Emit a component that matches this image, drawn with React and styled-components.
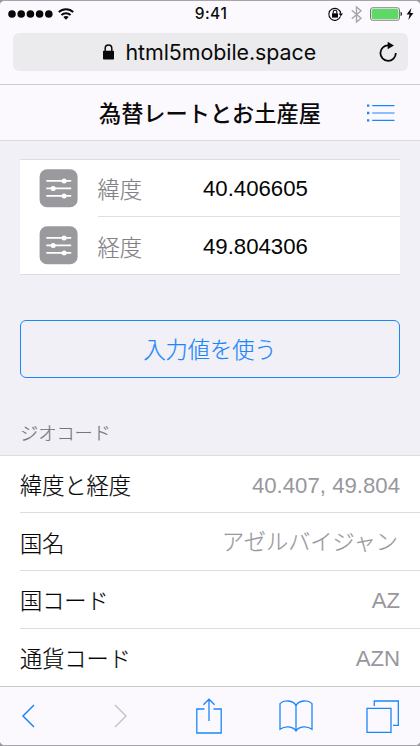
import React from 'react';
import styled, { createGlobalStyle } from 'styled-components';

const BLUE = '#1a86fb';

const GlobalStyle = createGlobalStyle`
  * { box-sizing: border-box; }
  body { margin: 0; background: #98989b; }
`;

const Phone = styled.div`
  width: 420px;
  height: 746px;
  border: 1px solid #a5a4a9;
  border-width: 1px 0;
  border-radius: 5px;
  overflow: hidden;
  display: flex;
  flex-direction: column;
  background: #f1f0f7;
  color: #0a0a0a;
  font-family: 'Liberation Sans', 'Noto Sans CJK JP', sans-serif;
  font-size: 22.2px;
  font-weight: 300;
  white-space: nowrap;
`;

const BrowserHeader = styled.header`
  height: 84px;
  background: #fbf9fd;
  border-bottom: 1px solid #cfcdd2;
`;

const StatusBar = styled.div`
  height: 32px;
  padding: 0 6px 6px 8px;
  display: grid;
  grid-template-columns: 1fr auto 1fr;
  align-items: center;
`;

const StatusSide = styled.div`
  display: flex;
  align-items: center;
  justify-content: ${(p) => (p.$end ? 'flex-end' : 'flex-start')};
`;

const Clock = styled.time`
  font: 500 15.5px/26px Inter, sans-serif;
  letter-spacing: 0.5px;
`;

const AddressBar = styled.div`
  height: 38px;
  margin: 0 12px 0 13px;
  padding: 0 11px 0 89px;
  border-radius: 6px;
  background: #ebebed;
  display: flex;
  align-items: center;
`;

const Address = styled.span`
  margin-left: 10.5px;
  margin-right: auto;
  font: 400 21.4px/38px Inter, sans-serif;
  letter-spacing: ${(p) => p.$tracking}px;
`;

const NavBar = styled.div`
  height: 57px;
  padding: 0 24px 0 99px;
  background: #fbf9fd;
  border-bottom: 1px solid #dcdbe0;
  display: flex;
  align-items: center;
  justify-content: space-between;
`;

const Title = styled.h1`
  margin: 0;
  font: 500 22.2px/55px 'Noto Sans CJK JP', sans-serif;
`;

const Content = styled.main`
  flex: 1;
  padding-top: 17.5px;
`;

const InputGroup = styled.section`
  margin: 0 20px;
  height: 116px;
  background: #fff;
  border: 1px solid #dddce3;
  border-width: 1px 0;
`;

const InputRow = styled.label`
  height: 57.3px;
  padding-left: 19.5px;
  display: flex;
  align-items: center;
`;

const InputCell = styled.div`
  flex: 1;
  height: 100%;
  margin-left: 20px;
  display: grid;
  grid-template-columns: 105.5px 1fr;
  align-items: center;
  border-bottom: ${(p) => (p.$last ? '0' : '1px solid #dfdee5')};
`;

const Label = styled.span`
  color: ${(p) => p.$color || '#050505'};
  font-family: 'Noto Sans CJK JP', sans-serif;
  line-height: 32px;
  padding-bottom: ${(p) => p.$lift || 0}px;
  -webkit-text-stroke: 0.2px;
`;

const Value = styled.span`
  color: ${(p) => (p.$muted ? '#98979d' : '#050505')};
  line-height: 30px;
  padding-top: 2px;
  padding-right: ${(p) => p.$inset || 0}px;
  -webkit-text-stroke: ${(p) => (p.$inset ? 0.2 : 0)}px;
`;

const UseButton = styled.button`
  display: block;
  width: 380px;
  height: 58px;
  margin: 45.5px 20px 0;
  padding: 0 0 3px;
  border: 1.5px solid ${BLUE};
  border-radius: 6px;
  background: transparent;
  color: ${BLUE};
  font: 300 22.2px/52px 'Noto Sans CJK JP', sans-serif;
  -webkit-text-stroke: 0.2px;
`;

const SectionLabel = styled.h2`
  margin: 38.5px 20px 8px;
  font: 300 18.2px/30px 'Noto Sans CJK JP', sans-serif;
  -webkit-text-stroke: 0.2px;
  color: #77767c;
`;

const List = styled.section`
  background: #fff;
  border-top: 1px solid #dddce1;
`;

const ListRow = styled.div`
  height: 57.6px;
  margin-left: 20px;
  padding: 1px 20px 0 0;
  display: flex;
  align-items: center;
  justify-content: space-between;
  border-bottom: ${(p) => (p.$last ? '0' : '1px solid #dddce1')};
`;

const ToolBar = styled.nav`
  height: 59px;
  padding: 0 20px 0 21px;
  background: #fbf9fd;
  border-top: 1.5px solid #c8c7cc;
  display: flex;
  align-items: center;
`;

const Icon = styled.svg`
  display: block;
  flex: none;
  overflow: visible;
  margin-left: ${(p) => p.$gap || 0}px;
`;

function SliderIcon() {
  return (
    <Icon width="38" height="38" viewBox="0.4 0.8 38 38">
      <rect width="38" height="38" rx="7.5" fill="#9a999e" />
      <path d="M6.7 11.7H31.6M6.7 19.2H31.6M6.7 26.7H31.6" stroke="#fff" strokeWidth="1.8" />
      <circle cx="24.5" cy="11.7" r="2.5" fill="#fff" />
      <circle cx="13.6" cy="19.2" r="2.5" fill="#fff" />
      <circle cx="24.5" cy="26.7" r="2.5" fill="#fff" />
    </Icon>
  );
}

const inputs = [
  { label: '緯度', value: '40.406605' },
  { label: '経度', value: '49.804306' },
];

const geocode = [
  { label: '緯度と経度', value: '40.407, 49.804' },
  { label: '国名', value: 'アゼルバイジャン', inset: 2 },
  { label: '国コード', value: 'AZ' },
  { label: '通貨コード', value: 'AZN' },
];

export default function App() {
  return (
    <>
      <GlobalStyle />
      <Phone>
        <BrowserHeader>
          <StatusBar>
            <StatusSide>
              <Icon width="46" height="10" viewBox="0 0 46 10">
                {[4, 13.2, 22.4, 31.6, 40.8].map((x) => (
                  <circle key={x} cx={x} cy="5" r="3.8" fill="#080808" />
                ))}
              </Icon>
              <Icon $gap={4} width="16" height="12" viewBox="0 0 16 12" fill="none" stroke="#080808" strokeWidth="2">
                <path d="M.8 4.1C4.8.2 11.2.2 15.2 4.1M3.4 7C6 4.6 10 4.6 12.6 7" />
                <path d="M5.3 9C6.8 7.7 9.2 7.7 10.7 9L8 11.8Z" fill="#080808" stroke="none" />
              </Icon>
            </StatusSide>
            <Clock>9:41</Clock>
            <StatusSide $end>
              <Icon width="15" height="14" viewBox="0 0 15 14" fill="none" stroke="#080808" strokeWidth="1.1">
                <path d="M12.5 9.4A6 6 0 1 1 12.8 6.6" />
                <path d="M10.6 6.4H15L12.8 9.2Z" fill="#080808" stroke="none" />
                <rect x="4" y="6.3" width="6" height="4.3" fill="#080808" stroke="none" />
                <path d="M5.2 6.5V5A1.8 1.8 0 0 1 8.8 5V6.5" />
              </Icon>
              <Icon $gap={8} width="11" height="17" viewBox="0 0 11 17" fill="none" stroke="#a6a5a9" strokeWidth="1.4">
                <path d="M.8 4.3 10 12.2 5.5 16V1L10 4.8.8 12.7" />
              </Icon>
              <Icon $gap={8} width="33" height="14" viewBox="0 0 33 14">
                <rect x=".5" y=".8" width="29" height="12.4" rx="2" fill="#fff" stroke="#777" strokeWidth="1" />
                <rect x="1.6" y="1.9" width="26.8" height="10.2" rx="1" fill="#5fd965" />
                <path d="M30.6 4.8C32.4 5.2 32.4 8.8 30.6 9.2Z" fill="#111" />
              </Icon>
              <Icon $gap={3} width="8" height="12" viewBox="0 0 8 12">
                <path d="M5.4 0 .6 6.6H3.6L2.3 12 7.4 5H4.3Z" fill="#080808" />
              </Icon>
            </StatusSide>
          </StatusBar>
          <AddressBar>
            <Icon width="13" height="16" viewBox="0 0 13 16">
              <path d="M3.2 7.5V4.3A3.3 3.3 0 0 1 9.8 4.3V7.5" fill="none" stroke="#080808" strokeWidth="1.5" />
              <rect x="1" y="6.8" width="11" height="8.7" rx=".8" fill="#080808" />
            </Icon>
            <Address $tracking={-0.05}>html5mobile.space</Address>
            <Icon width="18" height="20" viewBox="0 0 18 20">
              <path d="M9.6 3.4A7.7 7.7 0 1 0 16.8 11" fill="none" stroke="#080808" strokeWidth="1.8" />
              <path d="M8.7 -.3 14.9 3.5 8.7 7.2Z" fill="#080808" />
            </Icon>
          </AddressBar>
        </BrowserHeader>

        <NavBar>
          <Title>為替レートとお土産屋</Title>
          <Icon width="29" height="18" viewBox="0 0 29 18" stroke={BLUE} strokeWidth="1.2">
            <path d="M5.2 1.7H27.5M5.2 9H27.5M5.2 16.3H27.5" />
            <path d="M0 1.7H2.3M0 9H2.3M0 16.3H2.3" strokeWidth="2.3" />
          </Icon>
        </NavBar>

        <Content>
          <InputGroup>
            {inputs.map((row, i) => (
              <InputRow key={row.label}>
                <SliderIcon />
                <InputCell $last={i === inputs.length - 1}>
                  <Label $color="#828187">{row.label}</Label>
                  <Value>{row.value}</Value>
                </InputCell>
              </InputRow>
            ))}
          </InputGroup>
          <UseButton type="button">入力値を使う</UseButton>
          <SectionLabel>ジオコード</SectionLabel>
          <List>
            {geocode.map((row, i) => (
              <ListRow key={row.label} $last={i === geocode.length - 1}>
                <Label $lift={1}>{row.label}</Label>
                <Value $muted $inset={row.inset}>{row.value}</Value>
              </ListRow>
            ))}
          </List>
        </Content>

        <ToolBar>
          <Icon width="14" height="24" viewBox="0 0 14 24" fill="none" stroke={BLUE} strokeWidth="1.5">
            <path d="M13 1 2 12 13 23" />
          </Icon>
          <Icon $gap={79} width="14" height="24" viewBox="0 0 14 24" fill="none" stroke="#c6c5ca" strokeWidth="1.5">
            <path d="M1 1 12 12 1 23" />
          </Icon>
          <Icon $gap={68} width="26" height="36" viewBox="0 0 26 36" fill="none" stroke={BLUE} strokeWidth="1.3">
            <path d="M8.5 11H.8V35H25.2V11H17.5M13 23V1.2M7.4 6.8 13 1.2 18.6 6.8" />
          </Icon>
          <Icon $gap={57} width="34" height="32" viewBox="0 0 34 32" fill="none" stroke={BLUE} strokeWidth="1.3">
            <path d="M17 5.6C14-.1 5-.3 1 3.6V29.3C6 25.7 13.7 26 17 31 20.3 26 28 25.7 33 29.3V3.6C29-.3 20-.1 17 5.6ZM17 5.6V31" />
          </Icon>
          <Icon $gap={53} width="33" height="33" viewBox="0 0 33 33" fill="none" stroke={BLUE} strokeWidth="1.3">
            <path d="M1 8.3H25V32.3H1ZM8.3 6V1H32.3V25.3H27" />
          </Icon>
        </ToolBar>
      </Phone>
    </>
  );
}
